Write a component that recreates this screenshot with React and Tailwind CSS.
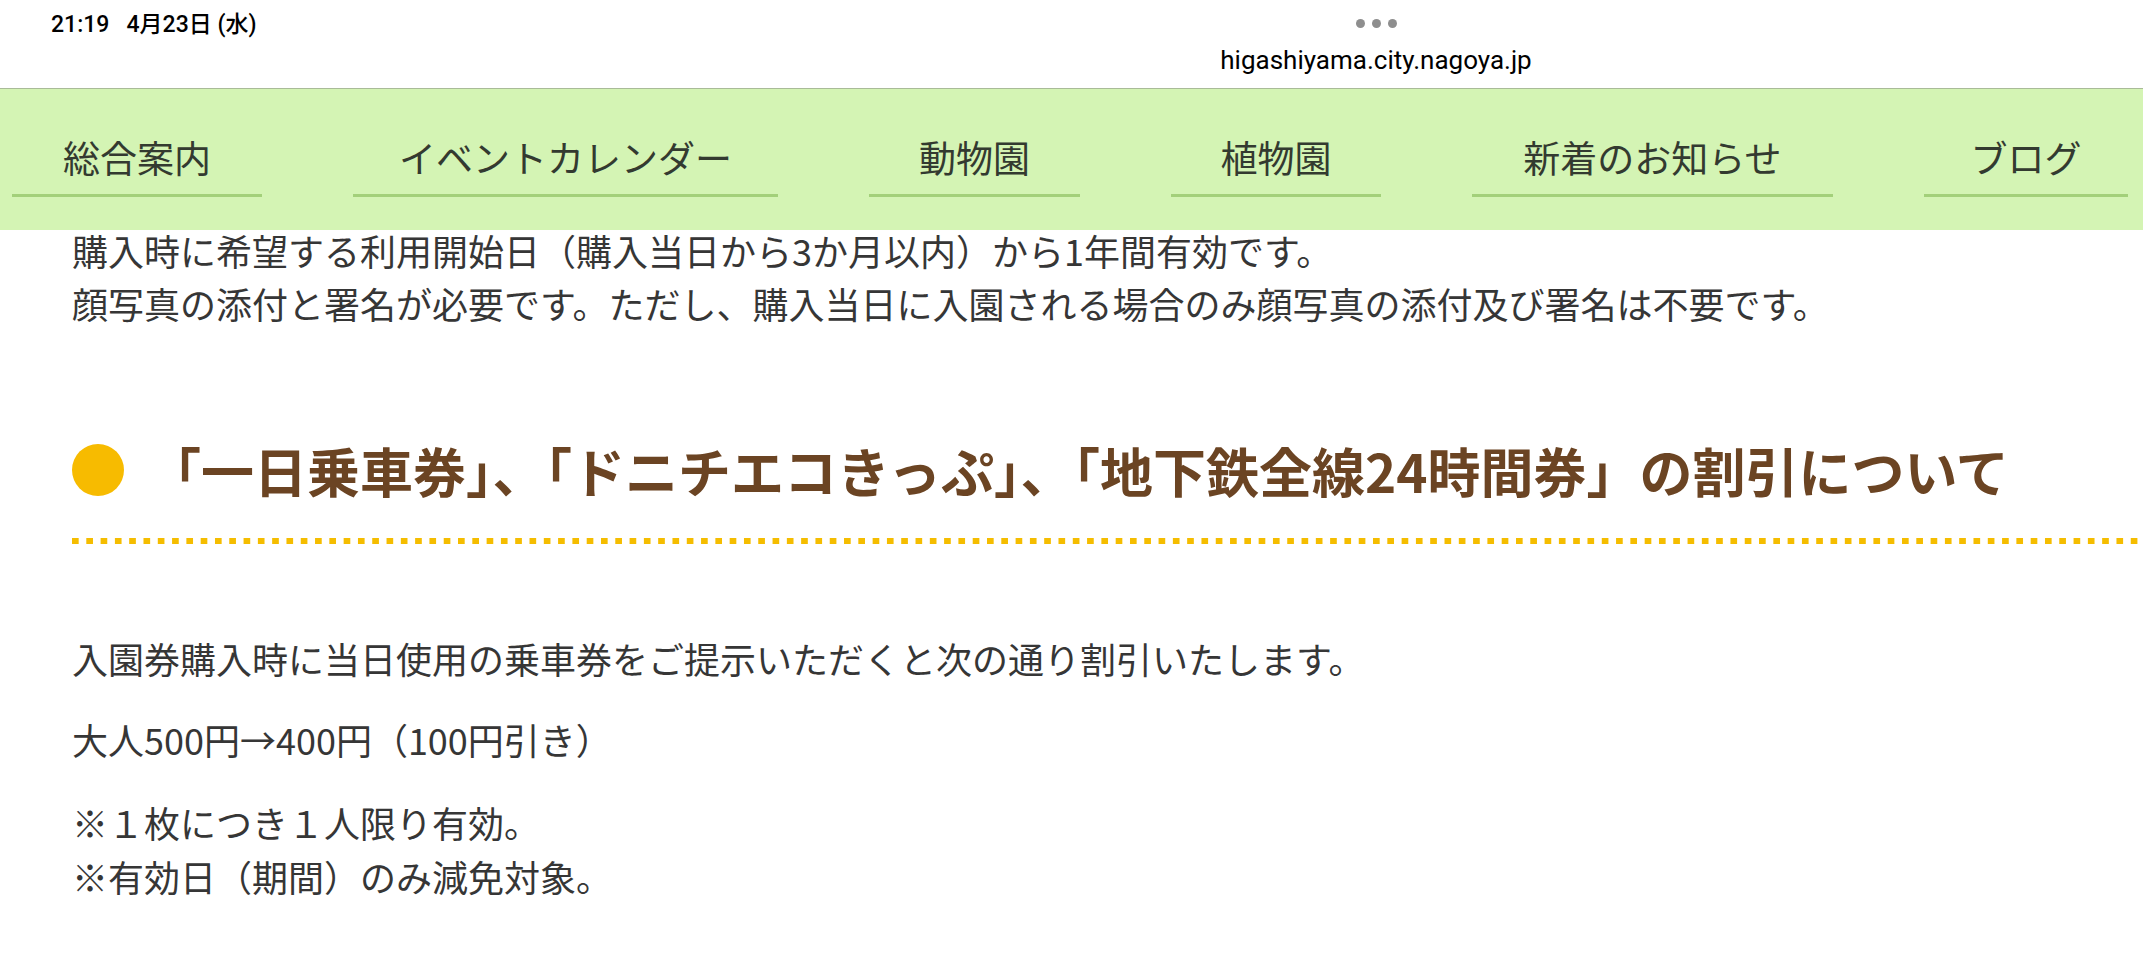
const jp = "font-['Noto_Sans_CJK_JP',sans-serif]";

const navItems = [
  { label: "総合案内", w: "w-[250px]" },
  { label: "イベントカレンダー", w: "w-[425px]" },
  { label: "動物園", w: "w-[211px]" },
  { label: "植物園", w: "w-[210px]" },
  { label: "新着のお知らせ", w: "w-[361px]" },
  { label: "ブログ", w: "w-[204px]" },
];

function StatusBar() {
  return (
    <div className="flex h-[88px] pl-[51px] bg-white">
      <div className="w-[1025px] pt-[10px] text-[23px] leading-[30px] font-medium text-black font-['Roboto','Noto_Sans_CJK_JP',sans-serif]">
        21:19&nbsp;&nbsp;&nbsp;4月23日 (水)
      </div>
      <div className="w-[600px] flex flex-col items-center pt-[19px]">
        <div className="flex gap-[7px]">
          <span className="w-[9px] h-[9px] rounded-full bg-[#8e8e8e]"></span>
          <span className="w-[9px] h-[9px] rounded-full bg-[#8e8e8e]"></span>
          <span className="w-[9px] h-[9px] rounded-full bg-[#8e8e8e]"></span>
        </div>
        <div className="mt-[16px] text-[26px] leading-[32px] text-black font-['Roboto',sans-serif]">
          higashiyama.city.nagoya.jp
        </div>
      </div>
    </div>
  );
}

function NavBar() {
  return (
    <nav className="relative z-10 h-[142px] border-t border-[#a9bb98] bg-[#d4f4b4] flex justify-between pl-[12px] pr-[15px] pt-[46px]">
      {navItems.map((item) => {
        return (
          <div
            key={item.label}
            className={`${item.w} h-[62px] border-b-[3px] border-[#a3d07a] text-center text-[37px] leading-[44px] text-[#333a30] ${jp}`}
          >
            {item.label}
          </div>
        );
      })}
    </nav>
  );
}

function App() {
  return (
    <div className="w-[2143px] h-[980px] overflow-hidden bg-white">
      <StatusBar />
      <NavBar />
      <div className={`-mt-[6px] pl-[72px] text-[36px] text-[#363636] ${jp}`}>
        <p className="leading-[53px]">
          購入時に希望する利用開始日（購入当日から3か月以内）から1年間有効です。
          <br />
          顔写真の添付と署名が必要です。ただし、購入当日に入園される場合のみ顔写真の添付及び署名は不要です。
        </p>

        <div className="mt-[109px] flex items-center">
          <span className="w-[52px] h-[52px] rounded-full bg-[#f7bb00] shrink-0"></span>
          <h2 className="ml-[24px] text-[53px] leading-[62px] font-bold text-[#6b4423] whitespace-nowrap">
            「一日乗車券」、「ドニチエコきっぷ」、「地下鉄全線24時間券」の割引について
          </h2>
        </div>
        <div className="mt-[37px] h-[6px] bg-[linear-gradient(to_right,#f5bd00_6.5px,transparent_6.5px)] bg-[length:14.3px_6px]"></div>

        <p className="mt-[87px] leading-[54px]">
          入園券購入時に当日使用の乗車券をご提示いただくと次の通り割引いたします。
        </p>
        <p className="mt-[27px] leading-[54px]">大人500円→400円（100円引き）</p>
        <p className="mt-[29px] leading-[54px]">
          ※１枚につき１人限り有効。
          <br />
          ※有効日（期間）のみ減免対象。
        </p>
      </div>
    </div>
  );
}

export default App;
